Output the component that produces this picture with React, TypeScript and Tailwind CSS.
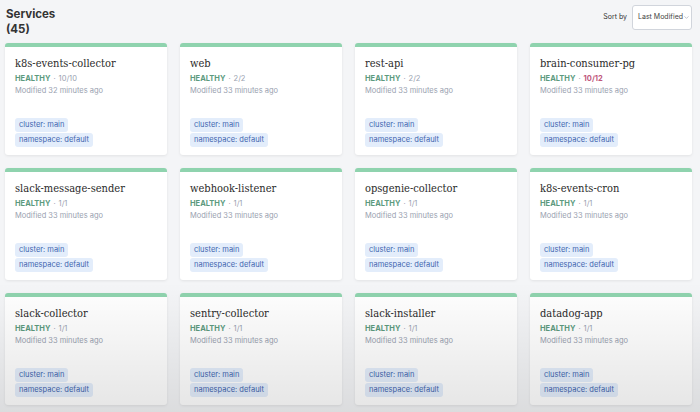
import React from "react";
import { ChevronDown } from "lucide-react";

type Service = { name: string; ready: string; mins: number; degraded?: boolean };

const services: Service[] = [
  { name: "k8s-events-collector", ready: "10/10", mins: 32 },
  { name: "web", ready: "2/2", mins: 33 },
  { name: "rest-api", ready: "2/2", mins: 33 },
  { name: "brain-consumer-pg", ready: "10/12", mins: 33, degraded: true },
  { name: "slack-message-sender", ready: "1/1", mins: 33 },
  { name: "webhook-listener", ready: "1/1", mins: 33 },
  { name: "opsgenie-collector", ready: "1/1", mins: 33 },
  { name: "k8s-events-cron", ready: "1/1", mins: 33 },
  { name: "slack-collector", ready: "1/1", mins: 33 },
  { name: "sentry-collector", ready: "1/1", mins: 33 },
  { name: "slack-installer", ready: "1/1", mins: 33 },
  { name: "datadog-app", ready: "1/1", mins: 33 },
];

const ServiceCard = ({ s }: { s: Service }) => {
  return (
    <div className="h-[112px] bg-white rounded-[3px] shadow-[0_1px_3px_rgba(0,0,0,0.08)] border-t-[4px] border-[#8fd3ae] flex flex-col px-[10px] pt-[8px] pb-[8px]">
      <div className="font-['DejaVu_Serif',serif] font-stretch-condensed text-[11px] leading-[18px] text-[#2a2a2a]">
        {s.name}
      </div>
      <div className="text-[7.5px] leading-[12px] font-bold flex items-center gap-[3px]">
        <span className="text-[#5c9a7e]">HEALTHY</span>
        <span className="text-gray-400 font-normal">·</span>
        <span className={s.degraded ? "text-[#c0577c]" : "text-gray-400 font-normal"}>{s.ready}</span>
      </div>
      <div className="text-[7.5px] leading-[12px] text-gray-400">
        Modified {s.mins} minutes ago
      </div>
      <div className="mt-auto flex flex-col items-start gap-[1px]">
        <span className="bg-[#e3edfb] text-[#3f66b0] text-[7.5px] leading-[14px] px-[4px] rounded-[3px]">
          cluster: main
        </span>
        <span className="bg-[#e3edfb] text-[#3f66b0] text-[7.5px] leading-[14px] px-[4px] rounded-[3px]">
          namespace: default
        </span>
      </div>
    </div>
  );
};

const App = () => {
  return (
    <div className="relative w-[700px] h-[412px] overflow-hidden bg-[#f4f5f7] font-['Inter',sans-serif]">
      <div className="flex items-start justify-between pl-[6px] pr-[8px] pt-[7px]">
        <div className="text-[11.5px] leading-[15px] font-bold text-[#333]">
          <div>Services</div>
          <div>(45)</div>
        </div>
        <div className="flex items-center gap-[5px] mt-[-2px]">
          <span className="text-[7px] text-[#333]">Sort by</span>
          <div className="h-[25px] w-[60px] bg-white border border-gray-300 rounded-[3px] flex items-center justify-between pl-[5px] pr-[4px] text-[7px] text-[#444] whitespace-nowrap">
            <span>Last Modified</span>
            <ChevronDown size={7} className="text-gray-400 shrink-0" />
          </div>
        </div>
      </div>
      <div className="grid grid-cols-4 gap-x-[13px] gap-y-[13px] pl-[5px] pr-[8px] mt-[6px]">
        {services.map((s) => (
          <ServiceCard key={s.name} s={s} />
        ))}
      </div>
      {/* bottom fade */}
      <div className="pointer-events-none absolute left-0 right-0 bottom-0 h-[130px] bg-gradient-to-b from-transparent to-[rgba(0,0,0,0.1)]" />
    </div>
  );
};

export default App;
